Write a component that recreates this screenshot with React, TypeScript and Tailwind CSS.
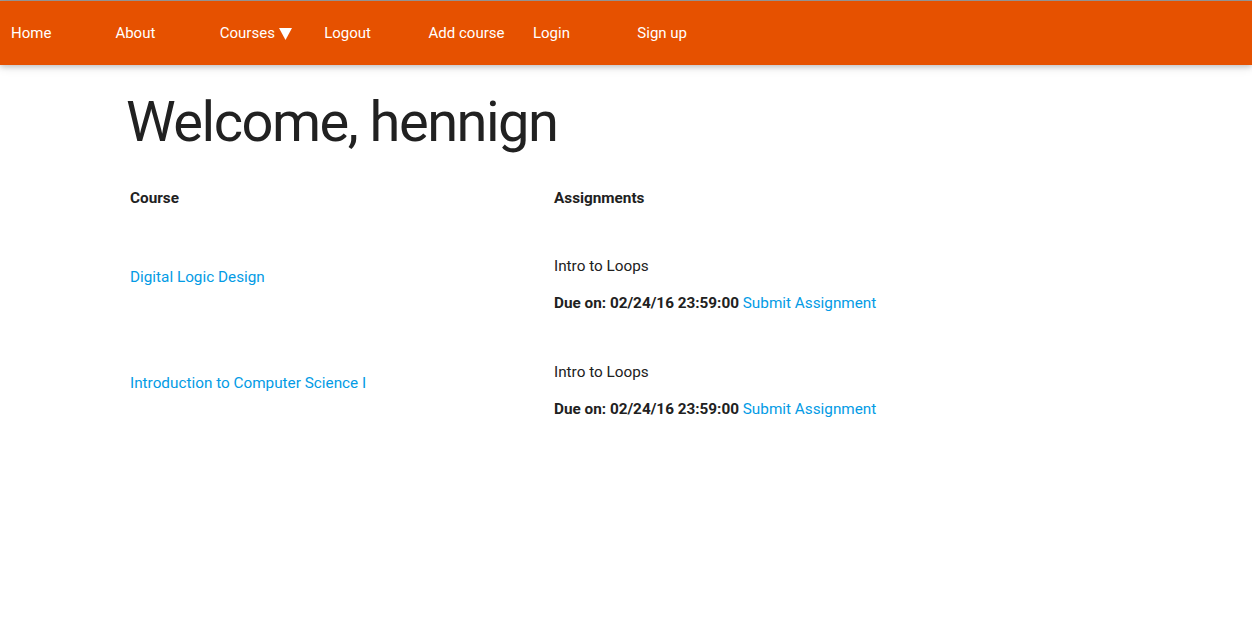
import React from "react";

const navItems = ["Home", "About", "Courses", "Logout", "Add course", "Login", "Sign up"];

const rows = [
  { course: "Digital Logic Design" },
  { course: "Introduction to Computer Science I" },
];

export default function App() {
  return (
    <div className="min-h-screen bg-white text-[#212121]" style={{ fontFamily: "Roboto, 'Liberation Sans', sans-serif" }}>
      <div className="h-px bg-[#9e9e9e]" />
      <nav className="h-16 bg-[#e65100] flex items-center shadow-[0_2px_5px_0_rgba(0,0,0,0.16),0_2px_10px_0_rgba(0,0,0,0.12)] relative z-10">
        {navItems.map((item) => (
          <a key={item} className="w-[104.4px] pl-[11px] text-white text-[15px] leading-[64px] flex items-center whitespace-nowrap">
            {item}
            {item === "Courses" && (
              <svg className="ml-[4px] mt-[1px]" width="13" height="13" viewBox="0 0 13 13">
                <polygon points="0,1 13,1 6.5,13" fill="white" />
              </svg>
            )}
          </a>
        ))}
      </nav>
      <div className="pl-[126px]">
        <h1 className="text-[56px] font-normal leading-[58px] mt-[28px] tracking-[-1.5px]">Welcome, hennign</h1>
        <table className="mt-[21px] text-[15.3px] border-collapse">
          <thead>
            <tr>
              <th className="w-[424px] text-left font-bold px-[4px] py-[15px] leading-[22px]">Course</th>
              <th className="text-left font-bold px-[4px] py-[15px] leading-[22px]">Assignments</th>
            </tr>
          </thead>
          <tbody>
            {rows.map((r, i) => (
              <tr key={i}>
                <td className="px-[4px] align-middle leading-[22px]">
                  <a className="text-[#039be5]">{r.course}</a>
                </td>
                <td className="px-[4px] pt-[31px] pb-[16px] align-top">
                  <p className="leading-[22px]">Intro to Loops</p>
                  <p className="mt-[15px] leading-[22px]">
                    <b>Due on: 02/24/16 23:59:00</b> <a className="text-[#039be5]">Submit Assignment</a>
                  </p>
                </td>
              </tr>
            ))}
          </tbody>
        </table>
      </div>
    </div>
  );
}
